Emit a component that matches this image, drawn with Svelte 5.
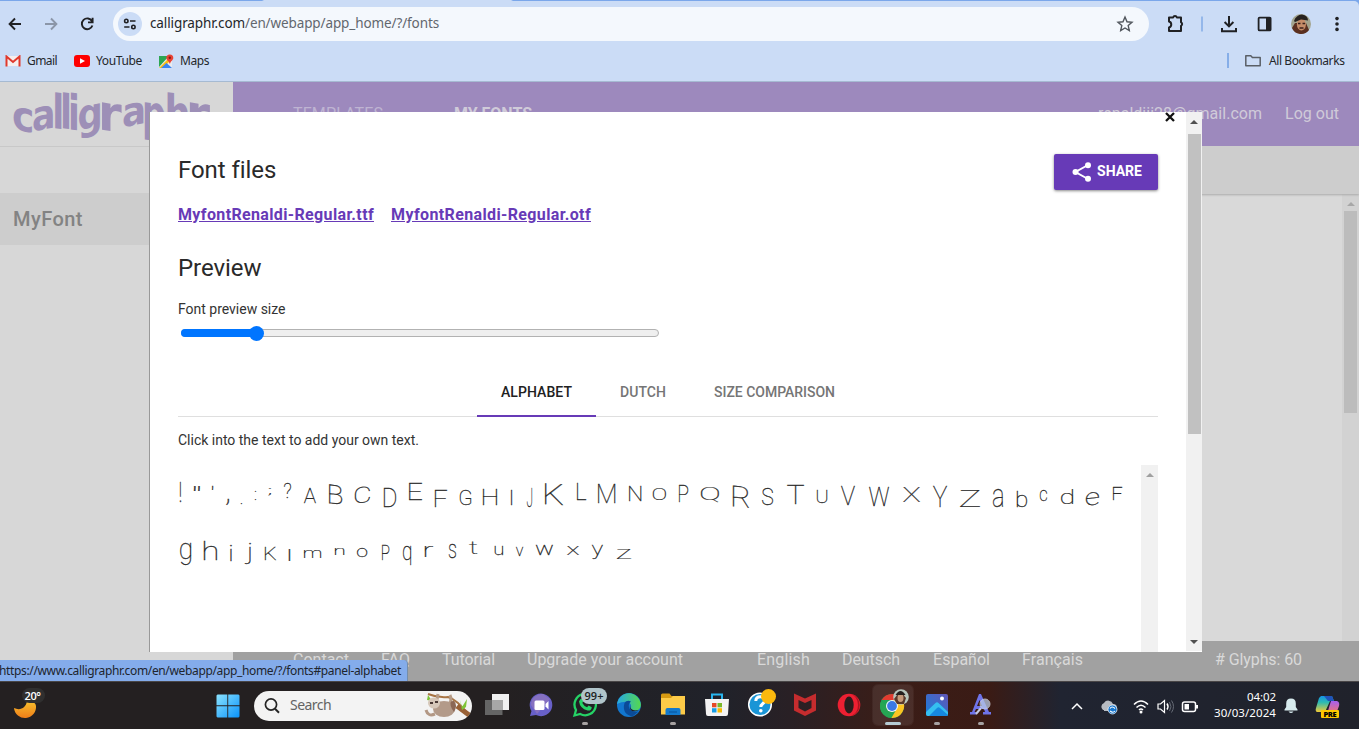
<script>
  import { onMount } from 'svelte';

  // Spreads letters so a label takes exactly the given width.
  function fit(node, width) {
    const w = node.getBoundingClientRect().width;
    node.style.letterSpacing = (width - w) / node.textContent.length + 'px';
  }

  // Handwriting preview: character, ink left, top, right, bottom, slope
  const lines = [
    [
      ['!', 2, 17, 3.2, 37], ['"', 16, 21, 22, 26], ["'", 34, 21, 35, 25], [',', 48, 34, 51, 40],
      ['.', 63, 38, 64, 39], [':', 77, 26, 78, 35], [';', 90, 23, 93, 30], ['?', 106, 18, 113, 33],
      ['A', 126, 24, 138, 38], ['B', 151, 19, 164, 38, 0.1], ['C', 177, 23, 192, 39, -0.12], ['D', 206, 24, 218, 42],
      ['E', 231, 18, 244, 35], ['F', 257, 25, 269, 42], ['G', 282, 25, 293, 40], ['H', 305, 24, 319, 40],
      ['I', 333, 25, 334, 40], ['J', 349, 23, 354, 42], ['K', 367, 18, 385, 39, 0.05], ['L', 399, 18, 408, 35],
      ['M', 420, 20, 437, 38], ['N', 451, 22, 463, 36], ['O', 475, 23, 488, 35], ['P', 501, 20, 510, 37],
      ['Q', 523, 22, 541, 37], ['R', 555, 20, 571, 41, 0.1], ['S', 584, 22, 595, 40], ['T', 609, 20, 626, 39],
      ['U', 639, 24, 649, 38], ['V', 663, 22, 677, 40], ['W', 691, 22, 711, 41], ['X', 725, 23, 742, 37],
      ['Y', 755, 21, 769, 42], ['Z', 782, 25, 802, 42], ['a', 815, 24, 825, 42], ['b', 839, 25, 849, 42],
      ['c', 862, 25, 869, 36], ['d', 883, 23, 895, 39], ['e', 908, 28, 921, 41, -0.1], ['F', 935, 22, 944, 35]
    ],
    [
      ['g', 2, 18, 13, 40], ['h', 26, 16, 39, 35], ['i', 52, 20, 54, 36], ['j', 67, 18, 73, 38],
      ['K', 87, 22, 98, 35], ['l', 111, 24, 112, 36], ['m', 126, 25, 143, 33], ['n', 157, 23, 166, 30],
      ['o', 179, 23, 189, 32], ['P', 204, 21, 211, 35], ['q', 225, 21, 233, 40], ['r', 247, 21, 255, 32],
      ['s', 271, 19, 278, 33], ['t', 291, 16, 299, 29], ['u', 317, 21, 325, 30], ['v', 338, 22, 345, 31],
      ['w', 358, 20, 375, 30], ['x', 389, 21, 401, 30], ['y', 414, 20, 425, 34], ['z', 439, 24, 453, 34]
    ]
  ];

  // Wordmark: character, left, top, right, bottom, slope
  const mark = [
    ['c', 0.5, 14, 19, 38, 0.22], ['a', 20.5, 17, 40, 41, -0.18], ['l', 42, 1, 48.3, 37, 0.12],
    ['l', 49.8, 1, 56.1, 37, 0.1], ['i', 57.8, 1, 64, 38, 0.15], ['g', 65.8, 16, 87, 49, -0.2],
    ['r', 88.8, 10, 109, 38, 0.16], ['a', 110.5, 14, 130.5, 37, -0.2], ['p', 131.8, 10, 152, 48, 0.15],
    ['h', 154.5, 1, 175, 38, 0.1], ['r', 176.8, 10, 197.5, 38, 0.16]
  ];

  let ready = $state(false);
  let ctx;
  onMount(() => {
    ctx = document.createElement('canvas').getContext('2d');
    ready = true;
  });

  // Maps the ink box of a 100px glyph on the wanted box.
  function place([ch, l, t, r, b, slope = 0], font) {
    ctx.font = font;
    const m = ctx.measureText(ch);
    const w = m.actualBoundingBoxRight + m.actualBoundingBoxLeft;
    const h = m.actualBoundingBoxAscent + m.actualBoundingBoxDescent;
    const sx = Math.max(r - l, 0.9) / w;
    const sy = (b - t) / h;
    return `matrix(${sx} ${slope * sx} 0 ${sy} ${l + m.actualBoundingBoxLeft * sx} ${t + m.actualBoundingBoxAscent * sy})`;
  }
</script>

<div class="screen">
  <div class="chrome">
    <div class="strip"><i></i></div>
    <div class="toolbar">
      <svg class="nav" width="100" height="24" viewBox="0 0 100 24" fill="none" stroke-width="1.9">
        <path d="M21 12H10M15 6.5L9.6 12l5.4 5.5" stroke="#202124" />
        <path d="M45 12h11M51 6.5l5.4 5.5-5.4 5.5" stroke="#8b96a8" />
        <path d="M92 9.2A5.4 5.4 0 1 0 92.4 13.5M92.6 5.8v4.6H88" stroke="#202124" />
      </svg>
      <div class="omni">
        <span class="tune"><svg width="14" height="14" viewBox="0 0 14 14" fill="none" stroke="#202124" stroke-width="1.6"><circle cx="3.3" cy="4" r="1.7" /><path d="M7 4h5.5M1.2 10h5.3" /><circle cx="10.4" cy="10" r="1.7" /></svg></span>
        <span class="url" use:fit={289}>calligraphr.com<em>/en/webapp/app_home/?/fonts</em></span>
        <svg class="star" width="18" height="18" viewBox="0 0 18 18" fill="none" stroke="#50555c" stroke-width="1.4"><path d="M9 2.1l2 4.7 5 .4-3.8 3.4 1.1 5L9 13l-4.3 2.6 1.1-5L2 7.2l5-.4z" /></svg>
      </div>
      <svg class="tools" width="200" height="28" viewBox="0 0 200 28" fill="none" stroke="#202124" stroke-width="2">
        <path d="M10 7.500h4.100a2 2 0 0 1 3.800 0H22v4.800a2 2 0 0 1 0 3.600v5.100H10v-3.600c3-.6 3-5.200 0-5.800z" stroke-linejoin="round" />
        <path d="M43 6.5v15" stroke="#86aee8" stroke-width="1.6" />
        <path d="M70 6v10M65.6 12l4.4 4.4 4.4-4.4M63 18v3.2h14V18" />
        <rect x="99.6" y="7.6" width="12" height="12.8" rx="1" stroke-width="1.8" /><path d="M107 7h4.5v14H107z" fill="#202124" stroke="none" />
        <g stroke="none"><circle cx="142" cy="14" r="10" fill="#a3a48e" /><path d="M133 18a9.800 9.800 0 0 0 17 2l-3-7-11 0z" fill="#5b3020" /><ellipse cx="142.400" cy="14.500" rx="4.500" ry="6" fill="#c58c68" /><path d="M135 11q2-6 8-6.500 6 1 6 6l-7-1-6 2.500z" fill="#27221f" /><path d="M139 13.500h2.500m2 0h2.500M140.500 18h4" stroke="#3b211b" stroke-width="1.500" />
          <g fill="#202124"><circle cx="178" cy="8.600" r="1.800" /><circle cx="178" cy="14" r="1.800" /><circle cx="178" cy="19.400" r="1.800" /></g></g>
      </svg>
    </div>
    <div class="bookmarks">
      <svg width="16" height="12" viewBox="0 0 16 12"><path d="M2 1h12v10H2z" fill="#f5eeee" /><path d="M1.500 11.500V1.500l6.500 5.500 6.500-5.500v10" fill="none" stroke="#e0392d" stroke-width="2" /></svg>
      <span class="g" use:fit={30}>Gmail</span>
      <svg class="yt" width="16" height="12" viewBox="0 0 16 12"><rect width="16" height="12" rx="3" fill="#f00" /><path d="M6 3.200v5.600L11 6z" fill="#fff" /></svg>
      <span class="y" use:fit={46}>YouTube</span>
      <svg class="mp" width="16" height="16" viewBox="0 0 16 16"><path d="M1 3h13v12H1z" fill="#e8ebef" /><path d="M1 3h10L1 14z" fill="#2da653" /><path d="M1 15L12 4l2 2-9 9z" fill="#fbbf12" /><path d="M3 15l5.500-5 5.500 5z" fill="#3984f2" /><path d="M8.300 5a3.500 3.500 0 0 1 7 0c0 2-2.600 3-3.400 6C11 8 8.300 7 8.300 5z" fill="#ea4335" /><circle cx="11.800" cy="4.700" r="1.200" fill="#811b15" /></svg>
      <span class="m" use:fit={29}>Maps</span>
      <i class="sep"></i>
      <svg width="16" height="13" viewBox="0 0 16 13" fill="none" stroke="#5a5f66" stroke-width="1.500"><path d="M.8 11V1.800h5l1.600 1.800h7.800v8.200H.8z" stroke-linejoin="round" /></svg>
      <span class="all" use:fit={75.5}>All Bookmarks</span>
    </div>
  </div>

  <div class="site">
    <aside>
      <div class="brand">
        <svg width="200" height="52" viewBox="0 0 200 52">
          {#if ready}
            {#each mark as g}
              <text class="mark" transform={place(g, 'bold 100px "DejaVu Sans"')}>{g[0]}</text>
            {/each}
          {/if}
        </svg>
      </div>
      <div class="font-row"><span use:fit={70}>MyFont</span></div>
    </aside>
    <main>
      <header>
        <span class="h1" use:fit={90}>TEMPLATES</span>
        <b class="h2" use:fit={78}>MY FONTS</b>
        <span class="h3" use:fit={164}>renaldiii28@gmail.com</span>
        <span class="h4" use:fit={54}>Log out</span>
      </header>
      <div class="subbar"></div>
      <div class="canvas"><div class="outer-bar"><svg width="8" height="4"><path d="M0 4l4-4 4 4z" fill="#a7a7a7" /></svg><i></i></div></div>
      <footer>
        <span style:margin-left="60px" use:fit={56}>Contact</span>
        <span style:margin-left="32px" use:fit={29}>FAQ</span>
        <span style:margin-left="32px" use:fit={53}>Tutorial</span>
        <span style:margin-left="32px" use:fit={156}>Upgrade your account</span>
        <span style:margin-left="74px" use:fit={53}>English</span>
        <span style:margin-left="32px" use:fit={58}>Deutsch</span>
        <span style:margin-left="33px" use:fit={57}>Español</span>
        <span style:margin-left="32px" use:fit={61}>Français</span>
        <span style:margin-left="132px" use:fit={87}># Glyphs: 60</span>
      </footer>
    </main>

    <section class="modal">
      <div class="body">
        <svg class="close" width="10" height="10" viewBox="0 0 10 10"><path d="M1 1l8 8M9 1L1 9" stroke="#111" stroke-width="2.300" /></svg>
        <div class="top">
          <h2 use:fit={97.500}>Font files</h2>
          <button><svg width="20" height="20" viewBox="0 0 20 20"><path d="M16 3L3.500 10 16 17" fill="none" stroke="#fff" stroke-width="2" /><g fill="#fff"><circle cx="16" cy="3.200" r="3" /><circle cx="3.500" cy="10" r="3" /><circle cx="16" cy="16.800" r="3" /></g></svg><span use:fit={45}>SHARE</span></button>
        </div>
        <div class="links"><a href="#ttf" use:fit={196}>MyfontRenaldi-Regular.ttf</a><a href="#otf" use:fit={200}>MyfontRenaldi-Regular.otf</a></div>
        <h2 class="pv" use:fit={83.500}>Preview</h2>
        <label for="size"><span use:fit={107.500}>Font preview size</span></label>
        <div class="slider" id="size"><div class="fill"></div><div class="knob"></div></div>
        <div class="tabs">
          <div class="tab on"><span use:fit={71}>ALPHABET</span></div>
          <div class="tab"><span use:fit={46}>DUTCH</span></div>
          <div class="tab"><span use:fit={121}>SIZE COMPARISON</span></div>
        </div>
        <p><span use:fit={241}>Click into the text to add your own text.</span></p>
        <div class="preview">
          <div class="lines">
            {#each lines as line}
              <svg width="962" height="58" viewBox="0 0 962 58">
                {#if ready}
                  {#each line as g}
                    <text class="hand" transform={place(g, '100 100px Roboto')}>{g[0]}</text>
                  {/each}
                {/if}
              </svg>
            {/each}
          </div>
          <div class="inner-bar"><svg width="8" height="4"><path d="M0 4l4-4 4 4z" fill="#a0a0a0" /></svg></div>
        </div>
      </div>
      <div class="bar"><svg width="8" height="4"><path d="M0 4l4-4 4 4z" fill="#505050" /></svg><i></i><svg width="8" height="4"><path d="M0 0l4 4 4-4z" fill="#505050" /></svg></div>
    </section>
    <div class="status"><span use:fit={402}>https://www.calligraphr.com/en/webapp/app_home/?/fonts#panel-alphabet</span></div>
  </div>

  <div class="taskbar">
    <svg class="weather" width="40" height="34" viewBox="0 0 40 34"><defs><linearGradient id="mo" x2="0" y2="1"><stop stop-color="#f7c02e" /><stop offset="1" stop-color="#ef7d18" /></linearGradient></defs><path d="M3 20c6 3 12 0 13-7 3 0 9 1 9 5a11 11 0 0 1-22 2z" fill="url(#mo)" /><rect x="11" width="23" height="15" rx="7.500" fill="#302f2f" /><text x="13.500" y="12" fill="#fff" font-family="Open Sans" font-size="11" textLength="16.500" font-weight="600">20°</text></svg>
    <svg class="win" width="24" height="24" viewBox="0 0 24 24"><defs><linearGradient id="wi" x2="1" y2="1"><stop stop-color="#8be3ff" /><stop offset="1" stop-color="#0a93fb" /></linearGradient></defs><path d="M1.500.5h9.800v10.800H.5V1.500zM12.200.5h10.300l1 1v9.800H12.200zM.5 12.200h10.800v11.300H1.500l-1-1zM12.200 12.200h11.300v10.300l-1 1H12.200z" fill="url(#wi)" /></svg>
    <div class="search">
      <svg width="16" height="16" viewBox="0 0 16 16" fill="none" stroke="#252525" stroke-width="1.700"><circle cx="7" cy="6.500" r="5.600" /><path d="M11 10.800l4 4" stroke-width="2" /></svg>
      <span use:fit={41}>Search</span>
      <svg class="sloth" width="48" height="28" viewBox="0 0 48 28"><path d="M4 2q10 4 20 3 10 3 20 18" fill="none" stroke="#a77444" stroke-width="2" /><path d="M33 14l12 9" stroke="#996136" stroke-width="5" /><path d="M4 3l4 6-5-1zM36 8l2 7 5-8-1 8-4 3z" fill="#7ec536" /><path d="M14 2q-1 8-4 11M23 15Q29 9 26 3" fill="none" stroke="#b69b86" stroke-width="3" /><ellipse cx="20" cy="17" rx="11" ry="8" fill="#b39a89" /><path d="M2 18q2 7 9 4" stroke="#b39885" stroke-width="3" fill="none" /><path d="M28 17Q24 8 30 9q4 4 0 11" fill="#8b6755" /><ellipse cx="10" cy="11" rx="6" ry="5.500" fill="#d6c7b9" /><path d="M6 11h3m2-1h3" stroke="#4b3a36" stroke-width="2" /></svg>
    </div>
    <div class="apps">
      <div class="app"><svg width="26" height="26" viewBox="0 0 26 26"><path d="M8 2h17v16H8z" fill="#f0f0f0" /><path d="M1 8h17.500v15H1z" fill="#656565" /><path d="M8 8h10.500v10H8z" fill="#a7a7a7" /></svg></div>
      <div class="app"><svg width="26" height="26" viewBox="0 0 26 26"><path d="M2 24l1.500-5A11.300 11.300 0 1 1 8 23z" fill="#6860c8" /><path d="M3 13A11 11 0 0 1 15 2l7 5-13 15z" fill="#9a7cba" opacity=".6" /><rect x="6.500" y="8.500" width="10" height="9.500" rx="1.500" fill="#fff" /><path d="M17.500 12l3-3v8.500l-3-3z" fill="#fff" /></svg></div>
      <div class="app"><svg width="26" height="26" viewBox="0 0 26 26"><path d="M2.500 23.500L4 18A10.700 10.700 0 1 1 8.200 22z" fill="none" stroke="#25d366" stroke-width="2.300" /><path d="M8.300 7.200q1.500-1.500 3 2l-1 1.700q2 3.500 4.800 4.400l1.500-1.700 3.200 1.600q-.5 4-4.300 3.300Q8 16.500 7 9.500z" fill="#25d366" /></svg><span class="badge">99+</span><i></i></div>
      <div class="app"><svg width="26" height="26" viewBox="0 0 26 26"><defs><linearGradient id="ed" x2="1"><stop stop-color="#27a8e5" /><stop offset="1" stop-color="#54d94d" /></linearGradient></defs><circle cx="13" cy="13" r="12" fill="#1277cf" /><path d="M1 12C3 2 12-1 19 3c6 4 8 12 3 15-3 2-8 0-7-3 1-4-4-8-14-3z" fill="url(#ed)" /><path d="M8.500 11q-3 11 8 13.500l6-5q-8 1-9.500-4-1-4 2-6-4-2-6.500 1.500z" fill="#0b4b98" /><path d="M15.500 11.500q-3 3.500.5 6 3 1.500 7 .5-3 2-7 1-4-3-.5-7.500z" fill="#212026" /></svg></div>
      <div class="app"><svg width="26" height="26" viewBox="0 0 26 26"><path d="M1 3q0-1.500 1.500-1.500h7l2 2.500H24q1 0 1 1v8H1z" fill="#d79a12" /><path d="M1 6h10l2-2h12v18.500H1z" fill="#fdcb48" /><path d="M5.500 23v-5q0-2 2-2h11q2 0 2 2v5z" fill="#1379cc" /><path d="M9 20h8" stroke="#07539b" /></svg><i></i></div>
      <div class="app"><svg width="26" height="26" viewBox="0 0 26 26"><path d="M8 8V2.500h10V8" fill="none" stroke="#29b6ef" stroke-width="2" /><path d="M1 7h24l-1 15q0 2-2 2H4q-2 0-2-2z" fill="#f3f3f3" /><path d="M8 11h4.500v4.300H8z" fill="#e54826" /><path d="M13.500 11H18v4.300h-4.500z" fill="#79b829" /><path d="M8 16.200h4.500v4.300H8z" fill="#169ce5" /><path d="M13.500 16.200H18v4.300h-4.500z" fill="#f6b900" /></svg></div>
      <div class="app"><svg width="30" height="32" viewBox="0 0 30 32"><circle cx="14" cy="15.500" r="11.300" fill="#1a95d6" stroke="#fff" stroke-width="1.500" /><path d="M9.800 12q0-4.300 4.500-4.300 4.500 0 4.500 3.800c0 3-4 3-4 6.500" fill="none" stroke="#fff" stroke-width="3" /><circle cx="14.800" cy="21.700" r="1.800" fill="#fff" /><circle cx="22.500" cy="7.500" r="7.500" fill="#fcb90e" /></svg></div>
      <div class="app"><svg width="26" height="26" viewBox="0 0 26 26"><path d="M2 1.500l11 5 11-5v17L13 24 2 18.500zM6.500 8v8l6.500 3.500 6.500-3.500V8L13 11z" fill="#c52c2e" fill-rule="evenodd" /></svg></div>
      <div class="app"><svg width="26" height="26" viewBox="0 0 26 26"><circle cx="13" cy="13" r="11.300" fill="#ed2032" /><path d="M15 2a11.300 11.300 0 0 1 0 22q7-3 7-11T15 2z" fill="#aa151f" /><ellipse cx="13" cy="13" rx="4.700" ry="8.500" fill="#2b1d1d" /></svg></div>
      <div class="app active"><svg width="32" height="32" viewBox="0 0 32 32"><circle cx="15" cy="17" r="12" fill="#20a557" /><path d="M4.600 11A12 12 0 0 1 25.400 11H15z" fill="#e33b30" /><path d="M4.600 11a12 12 0 0 0 9.800 18l5.500-9.500L9.500 18z" fill="#26a653" /><path d="M15 11h10.500A12 12 0 0 1 14.400 29l5.500-9.500z" fill="#fcc522" /><circle cx="15" cy="17" r="6" fill="#f3f6fb" /><circle cx="15" cy="17" r="4.900" fill="#3a79e5" /><circle cx="24" cy="8" r="7.800" fill="#b8c6bd" /><path d="M17 10l3 5h7l2-6-4-5-5 2z" fill="#59382b" /><ellipse cx="23.500" cy="9" rx="3" ry="4" fill="#c59a7b" /><path d="M18.500 6q5-8 10 0z" fill="#25201f" /></svg><i></i></div>
      <div class="app"><svg width="26" height="26" viewBox="0 0 26 26"><defs><linearGradient id="ph" x1="1" x2="0" y2="1"><stop stop-color="#6355b6" /><stop offset="1" stop-color="#167fdc" /></linearGradient></defs><rect x="2" y="2" width="22" height="22" rx="2" fill="url(#ph)" /><path d="M2 20l9.500-9q1.500-1.500 3 0L24 20v2q0 2-2 2H4q-2 0-2-2z" fill="#35bff0" /><path d="M5 24l8-8q1.500-1.500 3 0l8 7-1 1z" fill="#1688df" /><circle cx="18" cy="6.500" r="2" fill="#fff" /></svg><i></i></div>
      <div class="app"><svg width="26" height="26" viewBox="0 0 26 26"><path d="M11 2h2l8 18h2v2.500h-8V20h2l-1-3H8l-1.500 3h2v2.500H2V20h2zM11.500 8L9 14h5z" fill="#6f74ea" /><circle cx="17" cy="12" r="5" fill="#b8c9e6" opacity=".75" stroke="#d9deea" /><path d="M13 16l-5 6" stroke="#c4cbe3" stroke-width="2" /></svg><i></i></div>
    </div>
    <svg class="tray" width="136" height="24" viewBox="0 0 136 24" fill="none" stroke="#fff" stroke-width="1.500">
      <path d="M7 15l5-5 5 5" />
      <path d="M39 16h-1a4 4 0 0 1 1-7 5 5 0 0 1 9 1q4 0 4 4l-2 3H39z" fill="#b7bbc2" stroke="none" /><circle cx="47.500" cy="15.500" r="4.500" fill="#1877ce" stroke="#fff" stroke-width=".7" /><path d="M45 14.500q2-3 5 0M50 17q-2 2.500-5 0" stroke-width="1.100" />
      <path d="M69 10.500q7-7 14 0M71.500 13.500q4.500-4.500 9 0M74 16q2-2 4 0" /><circle cx="76" cy="18" r="1.500" fill="#fff" stroke="none" />
      <path d="M93 10h2.500l4-3.500v12l-4-3.500H93z" stroke-width="1.200" /><path d="M102 9.500q2 3 0 6" /><path d="M104.500 8q3 5 0 9M106.500 6.500q4 6 0 12" stroke="#666b76" stroke-width="1" />
      <rect x="117.500" y="8" width="13" height="9.500" rx="2" /><path d="M119.500 10h4.500v5.500h-4.500z" fill="#fff" stroke="none" /><path d="M132 11v3.500" stroke-width="2" />
    </svg>
    <div class="clock"><span use:fit={29}>04:02</span><span use:fit={62}>30/03/2024</span></div>
    <svg class="bell" width="14" height="16" viewBox="0 0 14 16"><path d="M7 .5q-4.800 0-4.800 5V9L.5 11.500v1h13v-1L11.800 9V5.500q0-5-4.800-5zM4.500 13.500q2.500 3 5 0z" fill="#d7ebee" /></svg>
    <svg class="pilot" width="26" height="24" viewBox="0 0 26 24"><defs><linearGradient id="ca" x2="0" y2="1"><stop stop-color="#1594e5" /><stop offset=".4" stop-color="#2dbab2" /><stop offset="1" stop-color="#f2cb35" /></linearGradient><linearGradient id="cb" x2="0" y2="1"><stop stop-color="#a55ff0" /><stop offset="1" stop-color="#f87862" /></linearGradient></defs><path d="M6 1h11l2 5h-4l-5 11H2q-2-1-1-4L4 3z" fill="url(#ca)" /><path d="M9 1h8l2 5h-6z" fill="#2054b9" /><path d="M16 6h6q3 1 2 5l-3 8h-9z" fill="url(#cb)" /><rect x="6" y="15" width="18" height="8" rx="1" fill="#ffc900" /><text x="8.500" y="21.800" font-family="Open Sans" font-weight="800" font-size="7.500" textLength="13">PRE</text></svg>
  </div>
</div>

<style>
  :global(body) { margin: 0; overflow: hidden; }
  .screen { width: 1359px; height: 729px; display: flex; flex-direction: column; overflow: hidden; font-family: Roboto, sans-serif; }
  span, b, a, h2 { white-space: nowrap; }
  svg { flex: none; display: block; }
  .chrome { height: 82px; background: #cbdcf6; border-bottom: 1px solid #a6bad2; font-family: "Noto Sans", sans-serif; color: #24272b; box-sizing: border-box; }
  .strip { height: 6px; background: linear-gradient(90deg, #7ba7ea 262px, #cbdcf6 264px 511px, #7ba7ea 513px); }
  .strip i { display: block; height: 5px; background: #cbdcf6; transform: translateY(1px); border-top-right-radius: 6px; }
  .toolbar { height: 36px; display: flex; align-items: center; }
  .nav { margin-right: 13px; }
  .omni { width: 1036px; height: 34px; border-radius: 17px; background: #f4f8fd; display: flex; align-items: center; font-size: 13.500px; box-sizing: border-box; padding: 0 15px 0 5px; }
  .tune { width: 24px; height: 24px; border-radius: 50%; background: #cbdcf6; display: grid; place-items: center; margin-right: 8px; }
  .url { padding-bottom: 2px; }
  .url em { font-style: normal; color: #62676e; }
  .star { margin-left: auto; }
  .tools { margin-left: 10px; }
  .bookmarks { height: 37px; display: flex; align-items: center; padding-left: 5px; font-size: 12px; }
  .g { margin-left: 6px; } .yt { margin-left: 17px; } .y { margin-left: 6px; } .mp { margin-left: 16px; } .m { margin-left: 6px; }
  .bookmarks .sep { width: 2px; height: 15px; background: #86aee8; margin-left: auto; margin-right: 16px; }
  .all { margin: 0 14.500px 0 8px; }
  .site { height: 599px; position: relative; display: flex; background: #d7d7d7; }
  aside { width: 233px; }
  .brand { height: 65px; border-bottom: 1px solid #c8c8c8; padding: 9px 0 0 13px; box-sizing: border-box; }
  .mark { font: bold 100px "DejaVu Sans"; fill: #9d8fb7; }
  .font-row { margin-top: 46px; height: 52px; background: #cdcdcd; line-height: 52px; padding-left: 13px; color: #838383; font-size: 20px; font-weight: 500; }
  main { width: 1126px; display: flex; flex-direction: column; }
  header { height: 64px; background: #9d89bd; color: #d0cbd9; display: flex; align-items: center; font-size: 16px; box-sizing: border-box; padding-bottom: 2px; }
  .h1 { margin-left: 60px; color: #bfb4d2; } .h2 { margin-left: 71px; font-weight: 700; } .h3 { margin-left: auto; } .h4 { margin: 0 20px 0 23px; }
  .subbar { height: 48px; background: #cdcdcd; box-shadow: 0 1px 2px #aaa; position: relative; clip-path: inset(0 0 -4px 0); }
  .canvas { height: 447px; background: #d9d9d9; display: flex; justify-content: flex-end; }
  .outer-bar { width: 17px; background: #d2d2d2; display: flex; flex-direction: column; align-items: center; padding-top: 8px; box-sizing: border-box; }
  .outer-bar i { width: 13px; height: 202px; background: #bcbcbc; margin-top: 5px; }
  footer { height: 40px; background: #a1a1a1; color: #d9d9d9; display: flex; font-size: 16px; line-height: 37px; }
  .modal { position: absolute; z-index: 2; left: 149px; top: 30px; width: 1053px; height: 540px; display: flex; background: #fff; border-left: 1px solid #999; box-sizing: border-box; color: #2a2a2a; overflow: hidden; }
  .body { width: 1036px; box-sizing: border-box; padding: 0 28px; position: relative; }
  .close { position: absolute; left: 1015px; top: 0; }
  .top { display: flex; justify-content: space-between; padding-top: 42px; height: 36px; }
  h2 { margin: 0; font-size: 24px; font-weight: 400; line-height: 32px; }
  button { width: 104px; height: 36px; border: 0; border-radius: 2px; background: #673ab7; color: #fff; font: 700 14px Roboto; display: flex; align-items: center; padding: 0 0 0 18px; gap: 5px; box-shadow: 0 1px 3px #0007; }
  button span { padding-bottom: 2px; }
  .links { display: flex; gap: 17px; margin-top: 13px; line-height: 24px; font-size: 16px; font-weight: 700; }
  a { color: #673ab7; }
  .pv { margin-top: 25px; width: max-content; }
  h2:not(.pv) { width: max-content; height: 32px; }
  label { display: block; margin-top: 15px; font-size: 14px; line-height: 20px; color: #333; }
  .slider { width: 478px; height: 8px; border-radius: 4px; box-sizing: border-box; border: 1px solid #b2b2b2; background: #efefef; margin: 10px 0 0 2.500px; display: flex; align-items: center; }
  .fill { width: 72px; height: 8px; background: #0075ff; border-radius: 4px 0 0 4px; margin-left: -1px; }
  .knob { width: 15px; height: 15px; border-radius: 50%; background: #0075ff; margin-left: -4px; flex: none; }
  .tabs { margin-top: 31px; height: 48px; border-bottom: 1px solid #dfdfdf; display: flex; justify-content: center; font-size: 14px; font-weight: 500; color: #757575; line-height: 48px; }
  .tab { padding: 0 24px; height: 47px; } .on { color: #212121; border-bottom: 2px solid #673ab7; }
  p { margin: 13px 0 0; font-size: 14px; line-height: 20px; color: #333; }
  .preview { display: flex; margin-top: 15px; height: 187px; justify-content: space-between; }
  .lines { display: flex; flex-direction: column; gap: 2px; }
  .hand { font: 100 100px Roboto; fill: #2b2b2b; stroke: #2b2b2b; stroke-width: 0.300px; vector-effect: non-scaling-stroke; }
  .inner-bar { width: 17px; background: #f1f1f1; display: flex; justify-content: center; padding-top: 8px; box-sizing: border-box; }
  .bar { width: 16px; height: 539px; background: #f1f1f1; display: flex; flex-direction: column; align-items: center; padding: 8px 0 7px; box-sizing: border-box; }
  .bar i { width: 13px; height: 300px; background: #c1c1c1; margin: 10px 0 auto; }
  .status { position: absolute; left: 0; top: 578px; width: 407px; height: 21px; background: #84aceb; border-top-right-radius: 4px; border-right: 1px solid #758da8; font: 12px/22px "Noto Sans", sans-serif; color: #20252d; }
  .status span { margin-left: -1px; }
  .taskbar { height: 48px; border-top: 1px solid #494647; box-sizing: border-box; display: flex; align-items: center; background: linear-gradient(90deg, #242021 0 500px, #20222a 720px, #292025 790px, #3b1d17 890px, #3a1b15 990px, #202431 1060px, #20222b); }
  .weather { margin: 6px 177px 0 11px; align-self: flex-start; }
  .win { margin-left: -12px; }
  .search { width: 218px; height: 30px; border-radius: 15px; background: #f3f3f3; margin-left: 14px; box-sizing: border-box; padding-left: 10px; display: flex; align-items: center; gap: 10px; font: 14px "Noto Sans"; color: #636363; }
  .search span { padding-bottom: 2px; }
  .sloth { margin-left: auto; }
  .apps { display: flex; margin-left: 5px; gap: 4px; padding-bottom: 1px; }
  .app { width: 40px; height: 40px; position: relative; display: grid; place-items: center; border-radius: 5px; }
  .app > i { position: absolute; bottom: 0; left: 17px; width: 6px; height: 3px; border-radius: 2px; background: #a7a2a2; }
  .active { background: #ffffff15; box-shadow: 0 0 0 1px #ffffff0c; }
  .app.active > i { width: 16px; left: 12px; background: #b6cbd3; }
  .badge { position: absolute; left: 16px; top: 3px; width: 26px; height: 16px; border-radius: 8px; background: #b0c4ca; color: #1b1f21; font: 600 11px/16px "Open Sans"; text-align: center; }
  .tray { margin-left: 64px; }
  .clock { margin-left: auto; display: flex; flex-direction: column; align-items: flex-end; font: 11.500px/16px "Noto Sans"; color: #fff; padding-bottom: 2px; }
  .bell { margin-left: 8px; } .pilot { margin: 2px 18px 0 17px; }
</style>
